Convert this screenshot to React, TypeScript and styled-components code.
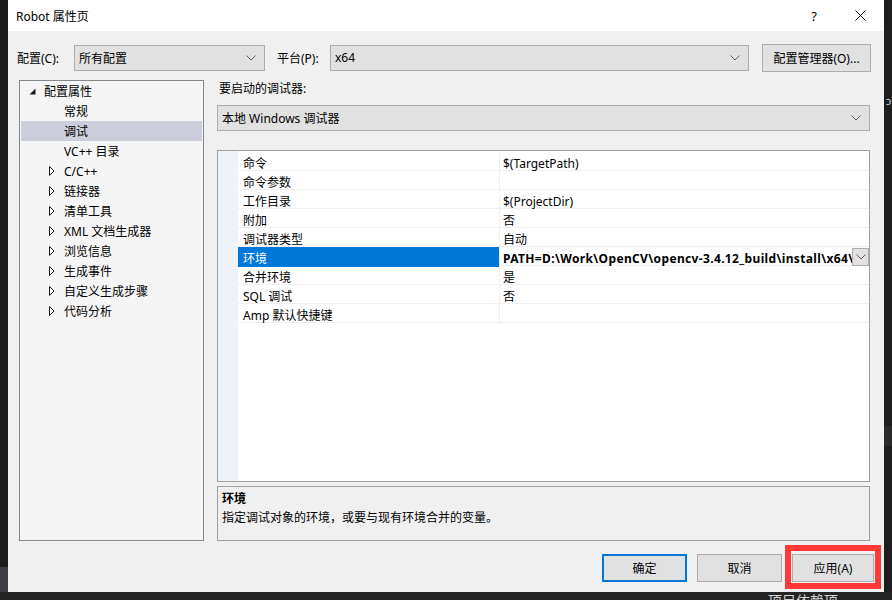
import React from "react";
import styled, { createGlobalStyle, css } from "styled-components";

const uiFont = `"Noto Sans", "Noto Sans CJK SC", sans-serif`;

const GlobalStyle = createGlobalStyle`
  html, body {
    margin: 0;
    padding: 0;
    background: #1e1e1e;
  }
  body {
    font-family: ${uiFont};
    font-size: 12px;
    color: #000;
  }
`;

const Frame = styled.div`
  display: grid;
  grid-template-columns: 8px 876px 8px;
  grid-template-rows: 592px 8px;
  width: 892px;
  height: 600px;
  overflow: hidden;
`;

const LeftStrip = styled.div`
  background: #1b1b1c;
  display: flex;
  flex-direction: column;
  justify-content: flex-end;
  .tab {
    height: 25px;
    background: #3c3c43;
  }
`;

const RightStrip = styled.div`
  background: #1e1e1e;
  display: flex;
  flex-direction: column;
  color: #cfcfcf;
  font-size: 11px;
  .glyph {
    margin-top: 94px;
    padding-left: 2px;
    line-height: 14px;
  }
  .shade {
    margin-top: 318px;
    height: 20px;
    background: #2b2b2e;
  }
`;

const BottomStrip = styled.div`
  grid-column: 1 / -1;
  background: #252526;
  overflow: hidden;
  color: #d4d4d4;
  font-size: 14px;
  line-height: 18px;
  span {
    display: block;
    margin-left: 768px;
  }
`;

const Dialog = styled.div`
  position: relative;
  display: flex;
  flex-direction: column;
  background: #f0f0f0;
`;

const TitleBar = styled.div`
  height: 31px;
  background: #fff;
  display: flex;
  align-items: center;
  padding-left: 8px;
  font-size: 12px;
`;

const TitleText = styled.div`
  flex: 1;
`;

const TitleButton = styled.div<{ $w: number }>`
  width: ${(p) => p.$w}px;
  height: 31px;
  display: flex;
  align-items: center;
  justify-content: center;
  font-size: 13px;
`;

const TopRow = styled.div`
  margin-top: 13px;
  height: 27px;
  display: flex;
  align-items: center;
  padding-left: 9px;
`;

const FieldLabel = styled.div<{ $w: number; $gap?: number }>`
  width: ${(p) => p.$w}px;
  margin-left: ${(p) => p.$gap ?? 0}px;
  font-size: 12px;
`;

const SelectBox = styled.div<{ $w?: number }>`
  ${(p) =>
    p.$w
      ? css`
          width: ${p.$w}px;
        `
      : css`
          flex: 1;
        `}
  box-sizing: border-box;
  height: 26px;
  background: #e1e1e1;
  border: 1px solid #adadad;
  display: flex;
  align-items: center;
  padding: 0 8px 0 4px;
  font-size: 12px;
  span {
    flex: 1;
    white-space: nowrap;
  }
`;

const PushButton = styled.div<{ $w: number; $primary?: boolean; $gap?: number }>`
  position: relative;
  width: ${(p) => p.$w}px;
  margin-left: ${(p) => p.$gap ?? 0}px;
  height: 28px;
  box-sizing: border-box;
  background: #e1e1e1;
  border: ${(p) => (p.$primary ? "2px solid #0078d7" : "1px solid #adadad")};
  display: flex;
  align-items: center;
  justify-content: center;
  font-size: 12px;
  white-space: nowrap;
`;

const Main = styled.div`
  margin-top: 9px;
  height: 461px;
  display: flex;
  gap: 13px;
  padding-left: 11px;
`;

const TreePanel = styled.div`
  width: 185px;
  box-sizing: border-box;
  background: #f5f5f5;
  border: 1px solid #828790;
  padding: 0 1px;
`;

const TreeRow = styled.div<{ $level: number; $selected?: boolean }>`
  height: 20px;
  display: flex;
  align-items: center;
  padding-left: ${(p) => (p.$level === 0 ? 8 : 28)}px;
  background: ${(p) => (p.$selected ? "#cccedb" : "transparent")};
  font-size: 12px;
  white-space: nowrap;
`;

const ArrowSlot = styled.div`
  width: 15px;
  display: flex;
  align-items: center;
`;

const RightColumn = styled.div`
  width: 653px;
  display: flex;
  flex-direction: column;
`;

const SectionLabel = styled.div`
  height: 17px;
  line-height: 17px;
  padding-left: 2px;
`;

const DebuggerSelect = styled(SelectBox)`
  margin-top: 8px;
  flex: none;
`;

const Grid = styled.div`
  margin-top: 19px;
  height: 332px;
  box-sizing: border-box;
  border: 1px solid #a0a0a0;
  background: #fff;
  display: flex;
`;

const GridMargin = styled.div`
  width: 20px;
  background: #eef2f9;
`;

const GridBody = styled.div`
  flex: 1;
  padding-top: 1px;
`;

const GridRow = styled.div`
  display: grid;
  grid-template-columns: 262px 1fr;
  height: 19px;
  box-sizing: border-box;
  border-bottom: 1px solid #f0f0f0;
`;

const NameCell = styled.div<{ $active?: boolean }>`
  padding: 2px 0 0 5px;
  display: flex;
  align-items: center;
  background: ${(p) => (p.$active ? "#0078d7" : "transparent")};
  color: ${(p) => (p.$active ? "#fff" : "#000")};
  border-right: 1px solid #f0f0f0;
  white-space: nowrap;
`;

const ValueCell = styled.div<{ $active?: boolean }>`
  display: flex;
  align-items: center;
  padding-left: 3px;
  overflow: hidden;
  white-space: nowrap;
  font-weight: ${(p) => (p.$active ? 700 : 400)};
  letter-spacing: ${(p) => (p.$active ? "0.35px" : "0")};
  span {
    flex: 1;
    overflow: hidden;
    padding-top: 2px;
  }
`;

const CellDrop = styled.div`
  width: 17px;
  height: 18px;
  box-sizing: border-box;
  flex: none;
  background: #e1e1e1;
  border: 1px solid #adadad;
  display: flex;
  align-items: center;
  justify-content: center;
`;

const Description = styled.div`
  margin-top: 4px;
  height: 55px;
  box-sizing: border-box;
  border: 1px solid #a0a0a0;
  background: #f0f0f0;
  padding: 2px 4px;
  line-height: 19px;
  b {
    display: block;
    font-weight: 700;
  }
`;

const Footer = styled.div`
  padding-top: 13px;
  padding-right: 10px;
  display: flex;
  justify-content: flex-end;
  gap: 10px;
`;

const Highlight = styled.div`
  position: absolute;
  top: -10px;
  left: -8px;
  right: -8px;
  bottom: -8px;
  border: 6px solid #ff3838;
  pointer-events: none;
`;

const Chevron = () => (
  <svg width="10" height="6" viewBox="0 0 10 6">
    <polyline points="0.5,0.5 5,5 9.5,0.5" fill="none" stroke="#606060" strokeWidth="1" />
  </svg>
);

const Expanded = () => (
  <svg width="7" height="7" viewBox="0 0 7 7">
    <polygon points="6.5,0.5 6.5,6.5 0.5,6.5" fill="#1e1e1e" />
  </svg>
);

const Collapsed = () => (
  <svg width="6" height="10" viewBox="0 0 6 10">
    <polygon points="0.5,0.5 5,5 0.5,9.5" fill="#fff" stroke="#1e1e1e" strokeWidth="1" />
  </svg>
);

const CloseIcon = () => (
  <svg width="11" height="11" viewBox="0 0 11 11">
    <line x1="0.5" y1="0.5" x2="10.5" y2="10.5" stroke="#000" strokeWidth="1" />
    <line x1="10.5" y1="0.5" x2="0.5" y2="10.5" stroke="#000" strokeWidth="1" />
  </svg>
);

type TreeItem = { label: string; level: number; kind?: "open" | "closed"; selected?: boolean };

const tree: TreeItem[] = [
  { label: "配置属性", level: 0, kind: "open" },
  { label: "常规", level: 1 },
  { label: "调试", level: 1, selected: true },
  { label: "VC++ 目录", level: 1 },
  { label: "C/C++", level: 1, kind: "closed" },
  { label: "链接器", level: 1, kind: "closed" },
  { label: "清单工具", level: 1, kind: "closed" },
  { label: "XML 文档生成器", level: 1, kind: "closed" },
  { label: "浏览信息", level: 1, kind: "closed" },
  { label: "生成事件", level: 1, kind: "closed" },
  { label: "自定义生成步骤", level: 1, kind: "closed" },
  { label: "代码分析", level: 1, kind: "closed" },
];

type Prop = { name: string; value: string; active?: boolean };

const props: Prop[] = [
  { name: "命令", value: "$(TargetPath)" },
  { name: "命令参数", value: "" },
  { name: "工作目录", value: "$(ProjectDir)" },
  { name: "附加", value: "否" },
  { name: "调试器类型", value: "自动" },
  {
    name: "环境",
    value: "PATH=D:\\Work\\OpenCV\\opencv-3.4.12_build\\install\\x64\\vc15\\bin;%PATH%",
    active: true,
  },
  { name: "合并环境", value: "是" },
  { name: "SQL 调试", value: "否" },
  { name: "Amp 默认快捷键", value: "" },
];

export default function App() {
  return (
    <>
      <GlobalStyle />
      <Frame>
        <LeftStrip>
          <div className="tab" />
        </LeftStrip>
        <Dialog>
          <TitleBar>
            <TitleText>Robot 属性页</TitleText>
            <TitleButton $w={44}>?</TitleButton>
            <TitleButton $w={48}>
              <CloseIcon />
            </TitleButton>
          </TitleBar>

          <TopRow>
            <FieldLabel $w={57}>配置(C):</FieldLabel>
            <SelectBox $w={191}>
              <span>所有配置</span>
              <Chevron />
            </SelectBox>
            <FieldLabel $w={53} $gap={12}>
              平台(P):
            </FieldLabel>
            <SelectBox $w={419}>
              <span>x64</span>
              <Chevron />
            </SelectBox>
            <PushButton $w={109} $gap={13}>
              配置管理器(O)...
            </PushButton>
          </TopRow>

          <Main>
            <TreePanel>
              {tree.map((t) => (
                <TreeRow key={t.label} $level={t.level} $selected={t.selected}>
                  <ArrowSlot>
                    {t.kind === "open" && <Expanded />}
                    {t.kind === "closed" && <Collapsed />}
                  </ArrowSlot>
                  {t.label}
                </TreeRow>
              ))}
            </TreePanel>

            <RightColumn>
              <SectionLabel>要启动的调试器:</SectionLabel>
              <DebuggerSelect>
                <span>本地 Windows 调试器</span>
                <Chevron />
              </DebuggerSelect>

              <Grid>
                <GridMargin />
                <GridBody>
                  {props.map((p) => (
                    <GridRow key={p.name}>
                      <NameCell $active={p.active}>{p.name}</NameCell>
                      <ValueCell $active={p.active}>
                        <span>{p.value}</span>
                        {p.active && (
                          <CellDrop>
                            <Chevron />
                          </CellDrop>
                        )}
                      </ValueCell>
                    </GridRow>
                  ))}
                </GridBody>
              </Grid>

              <Description>
                <b>环境</b>
                指定调试对象的环境，或要与现有环境合并的变量。
              </Description>
            </RightColumn>
          </Main>

          <Footer>
            <PushButton $w={85} $primary>
              确定
            </PushButton>
            <PushButton $w={85}>取消</PushButton>
            <PushButton $w={82}>
              应用(A)
              <Highlight />
            </PushButton>
          </Footer>
        </Dialog>
        <RightStrip>
          <div className="glyph">ɔ</div>
          <div className="shade" />
        </RightStrip>
        <BottomStrip>
          <span>项目依赖项</span>
        </BottomStrip>
      </Frame>
    </>
  );
}
